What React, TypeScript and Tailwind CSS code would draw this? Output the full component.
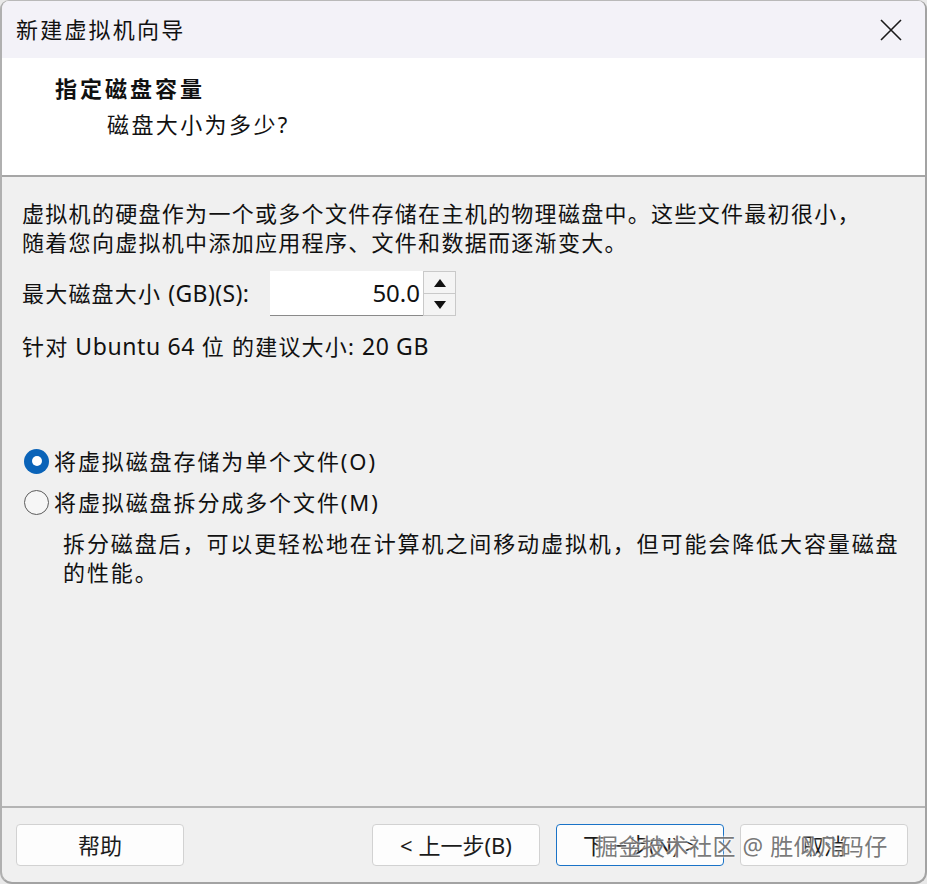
const font = "font-['Noto_Sans','Noto_Sans_CJK_SC',sans-serif]";

const Radio = ({ checked, label }: { checked: boolean; label: string }) => (
  <div className="flex items-center h-[36px]">
    {checked ? (
      <span className="w-[25px] h-[25px] rounded-full bg-[#0a63b8] flex items-center justify-center">
        <span className="w-[10px] h-[10px] rounded-full bg-white" />
      </span>
    ) : (
      <span className="w-[25px] h-[25px] rounded-full border-[1.5px] border-[#5c5c5c] bg-[#f6f6f6]" />
    )}
    <span className="ml-[5px] tracking-[1.9px]">{label}</span>
  </div>
);

const Button = ({ children, primary }: { children: React.ReactNode; primary?: boolean }) => (
  <button
    className={
      "w-[168px] h-[42px] rounded-[4px] bg-[#fdfdfd] text-[22px] text-[#1b1b1b] flex items-center justify-center " +
      (primary ? "border-[1.5px] border-[#1a73c7]" : "border border-[#d2d2d2]")
    }
  >
    {children}
  </button>
);

export default function App() {
  return (
    <div className={`w-[927px] h-[884px] bg-[#e9e9e9] ${font}`}>
      <div className="relative w-full h-full flex flex-col overflow-hidden rounded-t-[9px] rounded-b-[12px] border border-[#b9b9b9] border-r-[2px] border-b-[2px] border-l-[2px] border-r-[#a3a3a3] border-b-[#a3a3a3] border-l-[#b0b0b0] bg-[#f0f0f0] text-[#111]">
        {/* title bar */}
        <div className="h-[57px] shrink-0 bg-[#f3f2f8] flex items-center justify-between pl-[14px] pr-[22px]">
          <span className="text-[22px] tracking-[2.2px]">新建虚拟机向导</span>
          <svg width="24" height="24" viewBox="0 0 24 24" className="text-[#1a1a1a]">
            <path d="M2 2 L22 22 M22 2 L2 22" stroke="currentColor" strokeWidth="1.6" fill="none" />
          </svg>
        </div>

        {/* page header */}
        <div className="h-[119px] shrink-0 bg-white border-b-[2px] border-[#a6a6a6] pl-[53px] pt-[12px]">
          <div className="text-[22px] font-bold tracking-[3px] leading-[36px]">指定磁盘容量</div>
          <div className="text-[22px] tracking-[2.4px] leading-[36px] pl-[52px]">磁盘大小为多少?</div>
        </div>

        {/* body */}
        <div className="flex-1 pl-[20px] pt-[22px] text-[22px]">
          <div className="leading-[29px] tracking-[1.3px]">
            <div>虚拟机的硬盘作为一个或多个文件存储在主机的物理磁盘中。这些文件最初很小，</div>
            <div>随着您向虚拟机中添加应用程序、文件和数据而逐渐变大。</div>
          </div>

          <div className="flex items-center mt-[14px] h-[45px]">
            <span className="tracking-[1.2px] w-[248px]">
              最大磁盘大小 <span className="text-[23px] tracking-[0.4px]">(GB)(S):</span>
            </span>
            <div className="flex h-[45px]">
              <div className="w-[153px] bg-white border-b border-[#8a8a8a] flex items-center justify-end pr-[3px] text-[24px]">
                50.0
              </div>
              <div className="w-[33px] flex flex-col border border-[#c9c9c9] bg-[#f4f4f4]">
                <div className="flex-1 flex items-center justify-center border-b border-[#c9c9c9]">
                  <svg width="12" height="8" viewBox="0 0 12 8">
                    <path d="M6 0 L12 8 L0 8 Z" fill="#111" />
                  </svg>
                </div>
                <div className="flex-1 flex items-center justify-center">
                  <svg width="12" height="8" viewBox="0 0 12 8">
                    <path d="M0 0 L12 0 L6 8 Z" fill="#111" />
                  </svg>
                </div>
              </div>
            </div>
          </div>

          <div className="mt-[16px] leading-[29px] tracking-[1.2px]">
            针对 <span className="text-[23px] tracking-[0.6px]">Ubuntu 64</span> 位 的建议大小: <span className="text-[23px] tracking-[0.6px]">20 GB</span>
          </div>

          <div className="mt-[82px] ml-[2px] flex flex-col gap-[5px]">
            <Radio checked label="将虚拟磁盘存储为单个文件(O)" />
            <Radio checked={false} label="将虚拟磁盘拆分成多个文件(M)" />
          </div>

          <div className="ml-[41px] mt-[9px] leading-[29px] tracking-[1.9px]">
            <div>拆分磁盘后，可以更轻松地在计算机之间移动虚拟机，但可能会降低大容量磁盘</div>
            <div>的性能。</div>
          </div>
        </div>

        {/* footer */}
        <div className="h-[76px] shrink-0 border-t-[2px] border-[#b4b4b4] flex items-start pt-[16px] pl-[14px]">
          <Button>帮助</Button>
          <div className="ml-[188px] flex gap-[16px]">
            <Button>&lt; 上一步(B)</Button>
            <Button primary>下一步(N) &gt;</Button>
            <Button>取消</Button>
          </div>
        </div>

        {/* site watermark */}
        <div className="absolute left-[593px] top-[828px] text-[23px] tracking-[0.5px] text-[#555]/80 [text-shadow:0_0_2px_#fff,0_0_3px_#fff] pointer-events-none">
          掘金技术社区 @ 胜似凡码仔
        </div>
      </div>
    </div>
  );
}
